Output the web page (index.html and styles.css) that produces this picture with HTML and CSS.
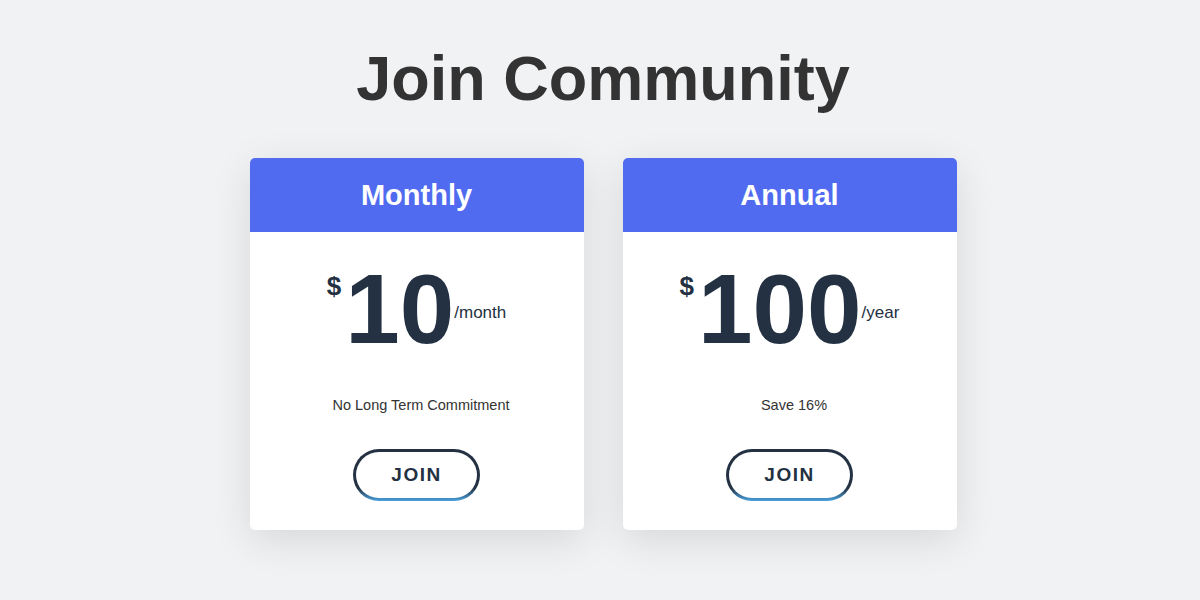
FILE: index.html
```html
<!DOCTYPE html>
<html lang="en">
  <head>
    <meta charset="UTF-8" />
    <meta name="viewport" content="width=device-width, initial-scale=1.0" />
    <title>Join Community</title>
    <link rel="stylesheet" href="styles.css">
  </head>
  <body>
    <div class="page">
      <h1 class="title">Join Community</h1>
      <div class="plans">
        <div class="plan">
          <div class="plan-header">Monthly</div>
          <div class="plan-body">
            <div class="price">
              <span class="currency">$</span>
              <span class="amount">10</span>
              <span class="period">/month</span>
            </div>
            <p class="note">No Long Term Commitment</p>
            <button class="join">JOIN</button>
          </div>
        </div>
        <div class="plan">
          <div class="plan-header">Annual</div>
          <div class="plan-body">
            <div class="price">
              <span class="currency">$</span>
              <span class="amount">100</span>
              <span class="period">/year</span>
            </div>
            <p class="note">Save 16%</p>
            <button class="join">JOIN</button>
          </div>
        </div>
      </div>
    </div>
  </body>
</html>
```

FILE: styles.css
```css
html,
body {
  margin: 0;
  background-color: #f1f2f4;
  font-family: "Liberation Sans", Arial, sans-serif;
}

.page {
  min-height: 600px;
  box-sizing: border-box;
  padding: 46px 0 70px 6px;
}

.title {
  margin: 0;
  font-size: 63px;
  line-height: 64px;
  font-weight: bold;
  text-align: center;
  color: #333333;
}

.plans {
  display: flex;
  justify-content: center;
  gap: 39px;
  margin-top: 48px;
}

.plan {
  width: 334px;
  background-color: #ffffff;
  border-radius: 5px;
  overflow: hidden;
  box-shadow: 0 10px 40px rgba(0, 0, 0, 0.11);
}

.plan-header {
  height: 74px;
  display: flex;
  align-items: center;
  justify-content: center;
  background-color: #506bf0;
  color: #ffffff;
  font-size: 29px;
  font-weight: bold;
}

.plan-body {
  display: flex;
  flex-direction: column;
  align-items: center;
  padding: 28px 0 29px;
}

.price {
  display: flex;
  justify-content: center;
  align-items: flex-start;
  color: #233142;
}

.currency {
  font-size: 26px;
  line-height: 1;
  font-weight: bold;
  margin-top: 13px;
}

.amount {
  font-size: 98px;
  line-height: 1;
  font-weight: bold;
  margin-left: 4px;
}

.period {
  font-size: 17px;
  line-height: 1;
  margin-top: 44px;
}

.note {
  margin: 37px 0 0;
  padding-left: 9px;
  font-size: 14.5px;
  line-height: 20px;
  color: #333333;
}

.join {
  margin-top: 34px;
  width: 127px;
  height: 52px;
  border: 3px solid transparent;
  border-radius: 26px;
  background: linear-gradient(#ffffff, #ffffff) padding-box,
    linear-gradient(to bottom, #233142 75%, #4aa3e0) border-box;
  color: #233142;
  font-family: "Liberation Sans", Arial, sans-serif;
  font-size: 19px;
  font-weight: bold;
  letter-spacing: 1.5px;
  cursor: pointer;
}
```
